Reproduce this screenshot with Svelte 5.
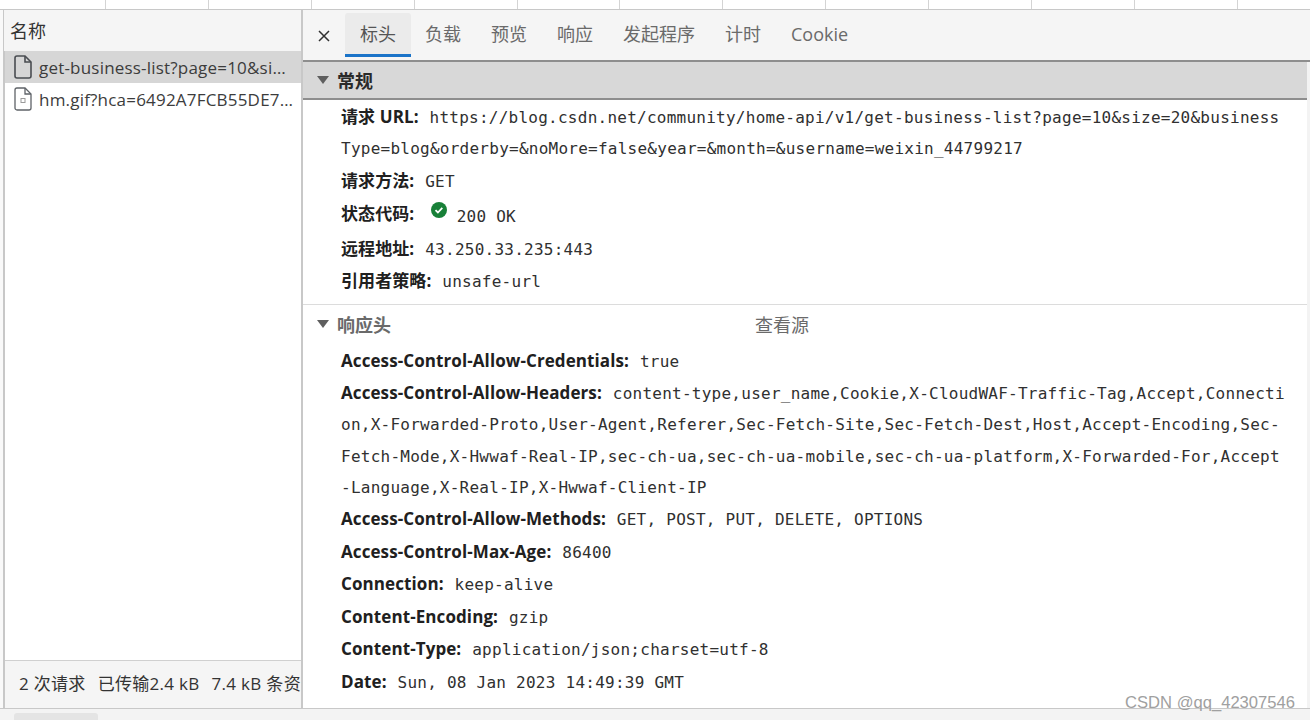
<script lang="ts">
  const topCols = Array(13).fill(0);
  const tabs = ["标头", "负载", "预览", "响应", "发起程序", "计时", "Cookie"];

  const general = [
    { key: "请求 URL:", val: "https://blog.csdn.net/community/home-api/v1/get-business-list?page=10&size=20&businessType=blog&orderby=&noMore=false&year=&month=&username=weixin_44799217" },
    { key: "请求方法:", val: "GET" },
    { key: "状态代码:", val: "200 OK", ok: true },
    { key: "远程地址:", val: "43.250.33.235:443" },
    { key: "引用者策略:", val: "unsafe-url" },
  ];

  const responseHeaders = [
    { key: "Access-Control-Allow-Credentials:", val: "true" },
    { key: "Access-Control-Allow-Headers:", val: "content-type,user_name,Cookie,X-CloudWAF-Traffic-Tag,Accept,Connection,X-Forwarded-Proto,User-Agent,Referer,Sec-Fetch-Site,Sec-Fetch-Dest,Host,Accept-Encoding,Sec-Fetch-Mode,X-Hwwaf-Real-IP,sec-ch-ua,sec-ch-ua-mobile,sec-ch-ua-platform,X-Forwarded-For,Accept-Language,X-Real-IP,X-Hwwaf-Client-IP" },
    { key: "Access-Control-Allow-Methods:", val: "GET, POST, PUT, DELETE, OPTIONS" },
    { key: "Access-Control-Max-Age:", val: "86400" },
    { key: "Connection:", val: "keep-alive" },
    { key: "Content-Encoding:", val: "gzip" },
    { key: "Content-Type:", val: "application/json;charset=utf-8" },
    { key: "Date:", val: "Sun, 08 Jan 2023 14:49:39 GMT" },
    { key: "Keep-Alive:", val: "timeout=20" },
  ];
</script>

<div class="page">
  <div class="top-strip">
    {#each topCols as _}
      <div class="top-col"></div>
    {/each}
  </div>

  <div class="main">
    <aside class="left">
      <div class="left-head">名称</div>
      <div class="req-list">
        <div class="req selected">
          <svg class="file" width="18" height="24" viewBox="0 0 18 24" fill="none" stroke="#4a4d52" stroke-width="1.6">
            <path d="M3 1h8l6 6v14a2 2 0 0 1-2 2H3a2 2 0 0 1-2-2V3a2 2 0 0 1 2-2z" />
            <path d="M11 1v6h6" />
          </svg>
          <span class="req-name">get-business-list?page=10&size=20&businessType=blog</span>
        </div>
        <div class="req">
          <svg class="file" width="18" height="24" viewBox="0 0 18 24" fill="none" stroke="#5f6368" stroke-width="1.3">
            <path d="M3 1h8l6 6v14a2 2 0 0 1-2 2H3a2 2 0 0 1-2-2V3a2 2 0 0 1 2-2z" />
            <path d="M11 1v6h6" />
            <rect x="7" y="11.500" width="4" height="4" stroke="#9a9a9a" stroke-width="1" />
          </svg>
          <span class="req-name">hm.gif?hca=6492A7FCB55DE7B2&cc=1&ck=1&cl=24-bit</span>
        </div>
      </div>
      <div class="left-foot"><span>2 次请求</span><span>已传输2.4 kB</span><span>7.4 kB 条资源</span></div>
    </aside>

    <section class="right">
      <div class="tabbar">
        <svg class="close" width="12" height="12" viewBox="0 0 12 12" stroke="#303030" stroke-width="1.5">
          <path d="M1 1l10 10M11 1L1 11" />
        </svg>
        {#each tabs as tab, i}
          <div class="tab" class:active={i === 0}>{tab}</div>
        {/each}
      </div>

      <div class="sec-head general">
        <svg width="12" height="8" viewBox="0 0 12 8"><path d="M0 0h12L6 8z" fill="#5f5f5f" /></svg>
        <span>常规</span>
      </div>
      <div class="rows first">
        {#each general as row}
          <div class="row" class:status={row.ok}>
            <span class="key">{row.key}</span>
            {#if row.ok}
              <svg class="ok" width="16" height="16" viewBox="0 0 16 16">
                <circle cx="8" cy="8" r="8" fill="#188038" />
                <path d="M4.500 8.200l2.400 2.300 4.400-4.600" fill="none" stroke="#fff" stroke-width="1.800" />
              </svg>
            {/if}
            <span class="val">{row.val}</span>
          </div>
        {/each}
      </div>

      <div class="sec-head plain">
        <svg width="12" height="8" viewBox="0 0 12 8"><path d="M0 0h12L6 8z" fill="#5f5f5f" /></svg>
        <span>响应头</span>
        <span class="view-source">查看源</span>
      </div>
      <div class="rows">
        {#each responseHeaders as row}
          <div class="row">
            <span class="key">{row.key}</span>
            <span class="val">{row.val}</span>
          </div>
        {/each}
      </div>
    </section>
  </div>

  <div class="bottom-bar"><div class="thumb"></div></div>
  <div class="watermark">CSDN @qq_42307546</div>
</div>

<style>
  :global(body) { margin: 0; background: #fff; }

  .page {
    position: relative; width: 1310px; height: 720px; overflow: hidden;
    display: flex; flex-direction: column;
    font-family: "Open Sans", "Noto Sans CJK SC", sans-serif; color: #303030;
  }

  .top-strip {
    display: flex; flex: 0 0 9px; background: #fff;
    border-bottom: 1px solid #c8c8c8; overflow: hidden;
  }
  .top-col { flex: 0 0 101.900px; border-right: 1px solid #d4d4d4; }
  .top-col:first-child { flex-basis: 105px; }

  .main { flex: 1; min-height: 0; display: flex; padding-left: 3px; background: #f9f9f9; }

  .left {
    flex: 0 0 300px; min-width: 0; box-sizing: border-box; display: flex; flex-direction: column; background: #fff;
    border-left: 2px solid #c8c8c8; border-right: 2px solid #c8c8c8;
  }
  .left-head {
    height: 41px; flex: none; background: #f5f5f5; padding-left: 6px;
    font-size: 18px; line-height: 42px; color: #333; margin-left: -1px;
  }
  .req-list { flex: 1; padding-left: 0; }
  .req {
    height: 32px; display: flex; align-items: center; gap: 7px; padding: 0 7.500px 0 9px;
    font-size: 17px; letter-spacing: 0.200px; color: #3c3c3c;
  }
  .selected { background: #d6d6d6; }
  .file { flex: none; }
  .req-name { white-space: nowrap; overflow: hidden; text-overflow: ellipsis; min-width: 0; }
  .left-foot {
    flex: 0 0 48px; display: flex; gap: 12px; align-items: center; padding: 0 0 4px 14px; box-sizing: border-box;
    background: #f5f5f5; border-top: 1px solid #d0d0d0;
    font-size: 17px; letter-spacing: 0.300px; color: #333; white-space: nowrap; overflow: hidden;
  }

  .right {
    flex: 1; min-width: 0; overflow: hidden; padding-right: 3px;
    background: linear-gradient(to right, #fff calc(100% - 3px), #f3f3f3 0);
  }

  .tabbar {
    height: 52px; display: flex; align-items: flex-start; background: #f5f5f5;
    border-bottom: 2px solid #8e8e8e; margin-right: -3px; box-sizing: border-box;
  }
  .close { margin: 20px 15px 0 15px; flex: none; }
  .tab {
    margin-top: 3px; height: 44px; box-sizing: border-box; padding: 0 15px; line-height: 43px;
    font-size: 18px; color: #6a6a6a; border-bottom: 3px solid transparent;
  }
  .tab.active {
    background: #ebebeb; color: #555; border-bottom-color: #1a73c8; border-radius: 3px 3px 0 0;
    margin-right: -1px;
  }

  .sec-head {
    display: flex; align-items: center; gap: 8px; padding-left: 14px; box-sizing: border-box;
    font-size: 18px; font-weight: 700;
  }
  .sec-head.general {
    height: 38px; background: #d8d8d8; border-bottom: 2px solid #8e8e8e; color: #2a2a2a;
  }
  .sec-head.plain { height: 41px; padding-bottom: 1px; border-top: 1px solid #dcdcdc; color: #6a6a6a; }
  .view-source { margin-left: 356px; font-weight: 400; font-size: 18px; color: #6a6a6a; }

  .rows { padding: 1px 20px 0 38px; }
  .rows.first { padding: 2px 20px 5px 38px; }
  .row {
    line-height: 30.200px; font-size: 17px; word-break: break-all; color: #202020;
    padding-bottom: 1.300px;
  }
  .row:last-child:not(.first .row) { padding-top: 2px; }
  .key { font-weight: 700; margin-right: 6.500px; word-break: normal; letter-spacing: 0.090px; }
  .val { font-family: "DejaVu Sans Mono", monospace; font-size: 16px; letter-spacing: 0.250px; color: #303030; }
  .row.status { padding-top: 1px; }
  .row.status .val { vertical-align: -2px; }
  .ok { margin: 0 5px 0 6px; vertical-align: 2px; }

  .bottom-bar { flex: 0 0 11px; background: #f3f3f3; border-top: 1px solid #c8c8c8; position: relative; z-index: 1; }
  .thumb { width: 84px; height: 7px; margin: 4px 0 0 14px; background: #e4e4e4; border-radius: 3px 3px 0 0; }

  .watermark {
    position: absolute; right: 15px; top: 693px; z-index: 2;
    font-family: "Liberation Sans", sans-serif; font-size: 16.600px; color: #a0a0a0;
  }
</style>
